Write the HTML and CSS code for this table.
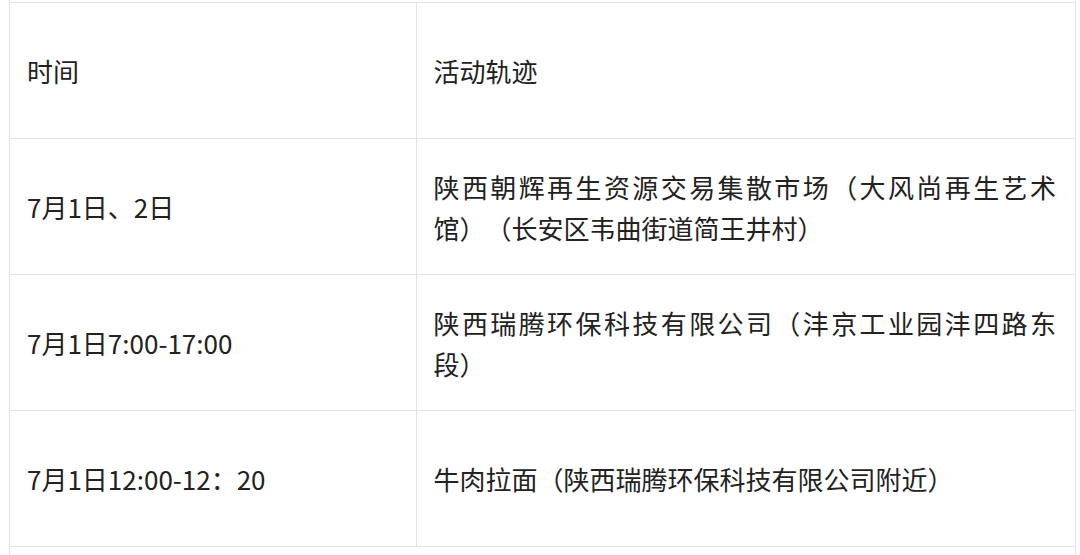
FILE: index.html
```html
<!DOCTYPE html>
<html lang="zh-CN">
<head>
<meta charset="utf-8">
<link rel="stylesheet" href="styles.css">
</head>
<body>
<div class="frame">
  <table class="trace">
    <colgroup>
      <col class="col-time">
      <col class="col-place">
    </colgroup>
    <tbody>
      <tr>
        <td class="time">时间</td>
        <td class="place">活动轨迹</td>
      </tr>
      <tr>
        <td class="time">7月1日、2日</td>
        <td class="place">陕西朝辉再生资源交易集散市场（大风尚再生艺术馆）（长安区韦曲街道简王井村）</td>
      </tr>
      <tr>
        <td class="time">7月1日7:00-17:00</td>
        <td class="place">陕西瑞腾环保科技有限公司（沣京工业园沣四路东段）</td>
      </tr>
      <tr>
        <td class="time">7月1日12:00-12：20</td>
        <td class="place">牛肉拉面（陕西瑞腾环保科技有限公司附近）</td>
      </tr>
    </tbody>
  </table>
  <div class="tail"></div>
</div>
</body>
</html>
```

FILE: styles.css
```css
html, body {
  margin: 0;
  padding: 0;
  background: #ffffff;
}

body {
  width: 1080px;
  height: 555px;
  overflow: hidden;
  font-family: "Noto Sans CJK SC", "Noto Sans", sans-serif;
  color: #222222;
}

.frame {
  margin-left: 9px;
  width: 1065px;
  padding-top: 2px;
  border-left: 1px solid #e3e3e3;
  border-right: 1px solid #e3e3e3;
}

.trace {
  width: 100%;
  border-collapse: collapse;
  table-layout: fixed;
}

.col-time {
  width: 406px;
}

.trace td {
  height: 136px;
  box-sizing: border-box;
  border-top: 1px solid #e3e3e3;
  border-bottom: 1px solid #e3e3e3;
  vertical-align: middle;
  font-size: 26px;
  line-height: 41px;
  text-align: justify;
  text-spacing-trim: space-all;
  padding: 0 19px 0 17px;
}

.trace td.time {
  border-right: 1px solid #e3e3e3;
}

.tail {
  height: 20px;
}
```
